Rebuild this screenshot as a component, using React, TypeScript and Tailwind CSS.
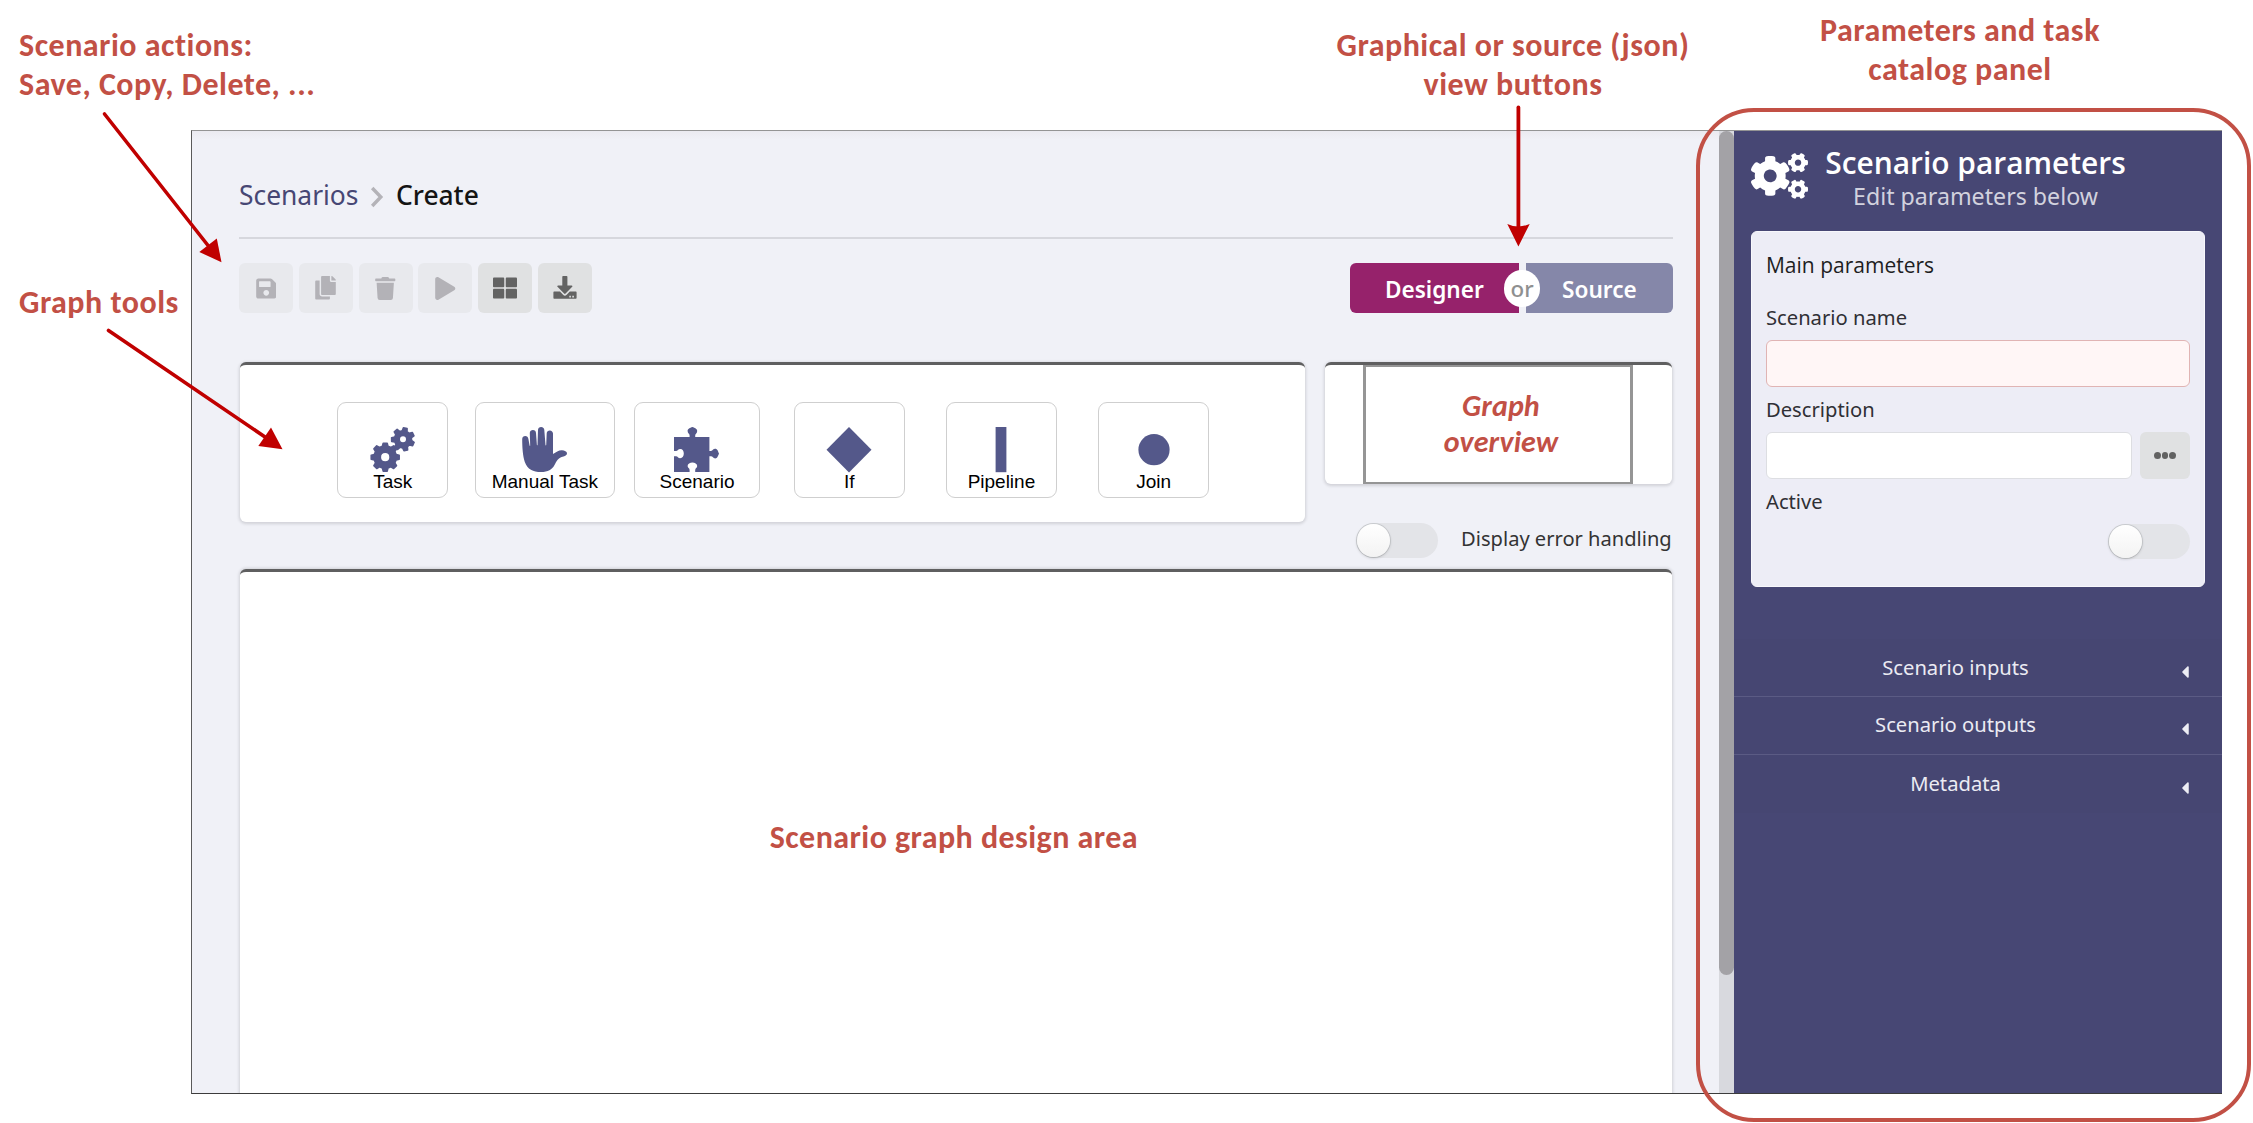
import type { ReactNode } from "react";
import { FaCaretLeft, FaCogs, FaCopy, FaPlay, FaSave, FaThLarge, FaTrash } from "react-icons/fa";

function gearPath(cx: number, cy: number, outer: number, root: number, hole: number, teeth: number, rot: number) {
  const step = (Math.PI * 2) / teeth;
  const at = (r: number, a: number) => `${(cx + r * Math.cos(a)).toFixed(2)} ${(cy + r * Math.sin(a)).toFixed(2)}`;
  let d = "";
  for (let i = 0; i < teeth; i++) {
    const a = rot + i * step;
    d += `${i ? "L" : "M"}${at(root, a - step * 0.32)}L${at(outer, a - step * 0.18)}L${at(outer, a + step * 0.18)}L${at(root, a + step * 0.32)}`;
  }
  return `${d}ZM${cx - hole} ${cy}a${hole} ${hole} 0 1 0 ${hole * 2} 0a${hole} ${hole} 0 1 0 ${-hole * 2} 0Z`;
}

const GearsIcon = () => (
  <svg viewBox="0 0 46 46" className="h-[46px] w-[46px] fill-[#54588a] stroke-[#54588a]" strokeWidth="1.6" strokeLinejoin="round" fillRule="evenodd">
    <path d={gearPath(15.2, 30.2, 14.1, 11.2, 4.9, 8, Math.PI / 2)} />
    <path d={gearPath(33, 12.3, 11.5, 8.6, 3.8, 7, 0.2 - Math.PI / 2)} />
  </svg>
);

const HandIcon = () => (
  <svg viewBox="0 0 46 46" className="h-[46px] w-[46px] fill-[#54588a]">
    <path d="M0.2 12C0.2 10 1.6 9 3.2 9C5 9 6.2 10.3 6.4 12L7.6 18.6C7.7 19 8.2 19 8.2 18.5L7.8 6C7.8 4 9.2 3 10.9 3C12.7 3 14 4.3 14 6L14.9 18C14.9 18.4 15.5 18.4 15.5 18L16 3C16 1.2 17.5 0 19.1 0C21 0 22.3 1.4 22.3 3L23.5 18C23.5 18.5 24.2 18.5 24.2 18L24.7 6.4C24.7 4.6 26.2 3.4 27.8 3.4C29.6 3.4 31 4.7 31 6.6V27C34 25 37 23 40 23.2C42.5 23.3 45 24.5 45 26.3C45 28 43.5 29 41.5 29.4C36 30.5 34.5 34 32.5 38C30 42.8 26 45 19 45C11 45 5.5 42.5 2.8 35C0.8 29 0.2 20 0.2 12Z" />
  </svg>
);

const PuzzleIcon = () => (
  <svg viewBox="0 0 46 46" className="h-[46px] w-[46px] fill-[#54588a]">
    <path d="M0 10H15.6V8.5C15.6 6.6 13.6 6.4 13.6 4C13.6 1.5 16 1 18.4 0C20.8 1 23.2 1.5 23.2 4C23.2 6.4 21.2 6.6 21.2 8.5V10H35.4V24H37C38.8 24 39 21.8 41.2 21.8C43.5 21.8 44 24.5 45 26.6C44 29 43.5 31.4 41.2 31.4C39 31.4 38.8 29.2 37 29.2H35.4V45H21.2V43C21.2 41 23.2 41 23.2 39C23.2 36.8 20.8 35.6 18.4 35.6C16 35.6 13.6 36.8 13.6 39C13.6 41 15.6 41 15.6 43V45H0V29.2H2C3.8 29.2 4 31.3 6.2 31.3C8.6 31.3 9.8 29 9.8 26.6C9.8 24 8.6 22 6.2 22C4 22 3.8 24 2 24H0Z" />
  </svg>
);

const DiamondIcon = () => (
  <svg viewBox="0 0 46 46" className="h-[46px] w-[46px] fill-[#54588a]">
    <path d="M23 0L45.5 22.7L23 45.4L0.5 22.7Z" />
  </svg>
);

const BarIcon = () => (
  <svg viewBox="0 0 46 46" className="h-[46px] w-[46px] fill-[#54588a]">
    <rect x="17.6" width="10.8" height="45.2" />
  </svg>
);

const CircleIcon = () => (
  <svg viewBox="0 0 46 46" className="h-[46px] w-[46px] fill-[#54588a]">
    <circle cx="23" cy="22.7" r="15.6" />
  </svg>
);

const DownloadIcon = () => (
  <svg viewBox="0 0 24 24" className="h-6 w-6 fill-current">
    <path d="M9.3 0.8a.8.8 0 0 1 .8-.8h3.5a.8.8 0 0 1 .8.8V9.4h4.2c.8 0 1.1.8.6 1.3L12.6 17.5a1 1 0 0 1-1.5 0L4.5 10.7c-.5-.5-.2-1.3.6-1.3h4.2Z" />
    <path d="M1.4 15.6H7l3.1 3.1a2.5 2.5 0 0 0 3.6 0l3.1-3.1h5.8c.6 0 1 .4 1 1v5.2c0 .6-.4 1-1 1H1.4c-.6 0-1-.4-1-1v-5.2c0-.6.4-1 1-1Zm14.9 5.8h1.6v-1.6h-1.6Zm3 0h1.6v-1.6h-1.6Z" fillRule="evenodd" />
  </svg>
);

function ActionButton({ active, children }: { active?: boolean; children: ReactNode }) {
  return (
    <button
      className={
        active
          ? "flex h-[49.6px] w-[54px] items-center justify-center rounded-md bg-[#e0e1e2] text-[#636363]"
          : "flex h-[49.6px] w-[54px] items-center justify-center rounded-md bg-[#e8e9ed] text-[#b3b2b7]"
      }
    >
      {children}
    </button>
  );
}

function Tool({ label, box, children }: { label: string; box: string; children: ReactNode }) {
  return (
    <div className="flex w-[152.2px] justify-center">
      <div className={`flex h-[96px] flex-col items-center rounded-[9px] border border-[#cfcfcf] pt-[24.5px] ${box}`}>
        {children}
        <span className="mt-[-2px] whitespace-nowrap font-['Liberation_Sans',sans-serif] text-[19px] leading-[22px] text-black">{label}</span>
      </div>
    </div>
  );
}

const Toggle = () => (
  <div className="flex h-[35px] w-[82px] shrink-0 items-center rounded-full bg-[#e3e4e8] pl-px">
    <div className="h-[33px] w-[33px] rounded-full bg-gradient-to-b from-white to-[#f3f3f3] shadow-[0_1px_3px_rgba(34,36,38,0.22),0_0_0_1px_rgba(34,36,38,0.1)]" />
  </div>
);

const Label = ({ children }: { children: ReactNode }) => (
  <div className="text-[20.2px] leading-7 text-[#303035]">{children}</div>
);

function AccordionRow({ label, last }: { label: string; last?: boolean }) {
  return (
    <div
      className={
        last
          ? "flex h-[57.8px] items-center bg-[#464672] pr-[31px]"
          : "flex h-[57.8px] items-center border-b border-[#5b5b84] bg-[#464672] pr-[31px]"
      }
    >
      <span className="mt-[-2px] grow pl-[1px] text-center text-[20.2px] leading-7 text-[#ebebf2]">{label}</span>
      <FaCaretLeft className="ml-[3px] mt-[8px] h-[20px] w-[12px] text-[#ededf4]" />
    </div>
  );
}

const note = "absolute whitespace-nowrap font-['Carlito','Lato',sans-serif] text-[32px] font-bold leading-[39px] tracking-[0.5px] text-[#c25045] [font-variant-ligatures:none]";

export default function App() {
  return (
    <div className="relative h-[1123px] w-[2253px] overflow-hidden bg-white pl-[191px] pt-[130px] font-['Noto_Sans','Open_Sans',sans-serif]">
      <div className="flex h-[963.5px] w-[2031px] overflow-hidden border-b border-l border-t border-b-[#3c3c3c] border-l-[#5a5a5a] border-t-[#949494] bg-[#f0f1f7]">
        <main className="flex h-full w-[1527.3px] shrink-0 flex-col overflow-hidden bg-[linear-gradient(#ebeaf0_0px,#f0f1f7_9px)] pl-[47px] pr-[46.6px]">
          <header className="flex h-[108px] shrink-0 items-start border-b-2 border-[#d6d7dd] pt-[47.5px] text-[26.4px] leading-8">
            <span className="text-[#474774]">Scenarios</span>
            <svg viewBox="0 0 14 22" className="ml-[12px] mr-[11.5px] mt-[7px] h-[22px] w-[14px] fill-none stroke-[#b4b3b8] stroke-[3.4]">
              <path d="M2.2 2L10.8 11L2.2 20" />
            </svg>
            <span className="font-medium text-[#141414]">Create</span>
          </header>

          <div className="mt-[24.3px] flex shrink-0 justify-between">
            <div className="flex gap-[5.8px]">
              <ActionButton><FaSave className="h-[23px] w-[20.5px]" /></ActionButton>
              <ActionButton><FaCopy className="h-[23.5px] w-[21px]" /></ActionButton>
              <ActionButton><FaTrash className="h-[23px] w-[20.5px]" /></ActionButton>
              <ActionButton><FaPlay className="h-[23px] w-[20.5px]" /></ActionButton>
              <ActionButton active><FaThLarge className="h-[24px] w-[24px]" /></ActionButton>
              <ActionButton active><DownloadIcon /></ActionButton>
            </div>
            <div className="relative flex gap-[7px] text-[22.6px] font-semibold leading-[50px] text-white">
              <button className="h-[50px] w-[169.6px] rounded-l-md bg-[#96226b] pt-[2px] leading-[49px]">Designer</button>
              <button className="h-[50px] w-[146.6px] rounded-r-md bg-[#8587a9] pt-[2px] leading-[49px]">Source</button>
              <span className="absolute left-[154.3px] top-[6.8px] flex h-[36.6px] w-[36.6px] items-center justify-center rounded-full bg-white pt-[2px] text-[22.4px] font-medium text-[#8f9090]">or</span>
            </div>
          </div>

          <div className="mt-[49.2px] flex h-[206.8px] shrink-0 justify-between pl-px pr-px">
            <section className="flex h-[160px] w-[1065px] rounded-[6px] border-t-[3px] border-[#5f5f60] bg-white pl-[76.6px] pt-[36.5px] shadow-[0_1px_3px_1px_rgba(34,36,38,0.15)]">
              <Tool label="Task" box="w-[111px]"><GearsIcon /></Tool>
              <Tool label="Manual Task" box="w-[140px]"><HandIcon /></Tool>
              <Tool label="Scenario" box="w-[126px]"><PuzzleIcon /></Tool>
              <Tool label="If" box="w-[111px]"><DiamondIcon /></Tool>
              <Tool label="Pipeline" box="w-[111px]"><BarIcon /></Tool>
              <Tool label="Join" box="w-[111px]"><CircleIcon /></Tool>
            </section>
            <div className="flex w-[347px] flex-col">
              <section className="flex h-[122px] rounded-[6px] border-t-[3px] border-[#5f5f60] bg-white pl-[38px] shadow-[0_1px_3px_1px_rgba(34,36,38,0.15)]">
                <div className="h-[119px] w-[270.5px] border-x-[3px] border-y-2 border-[#959595] pl-[6px] pt-[20.5px] text-center font-['Carlito','Lato',sans-serif] text-[30px] font-bold italic leading-[36px] tracking-[0.1px] text-[#c25045] [font-variant-ligatures:none]">
                  Graph<br />overview
                </div>
              </section>
              <div className="mt-[38.5px] flex items-center justify-between pl-[31.6px]">
                <Toggle />
                <span className="mt-[-2px] whitespace-nowrap text-[20.1px] leading-7 text-[#333]">Display error handling</span>
              </div>
            </div>
          </div>

          <section className="mx-px flex h-[560px] shrink-0 justify-center rounded-t-[6px] border-t-[3px] border-[#5f5f60] bg-white pt-[246px] shadow-[0_0_3px_1px_rgba(34,36,38,0.15)]">
            <span className="pr-1 font-['Carlito','Lato',sans-serif] text-[32px] font-bold leading-[39px] tracking-[0.45px] text-[#c25045] [font-variant-ligatures:none]">
              Scenario graph design area
            </span>
          </section>
        </main>

        <div className="h-full w-[14.7px] shrink-0 bg-[#d8d9de]">
          <div className="h-[844px] rounded-full bg-[#a3a2a6]" />
        </div>

        <aside className="flex h-full grow flex-col bg-[#474774]">
          <header className="flex h-[100.3px] shrink-0 pl-[17px] pt-[14.2px]">
            <FaCogs className="mt-[8px] h-[46px] w-[57px] text-white" />
            <div className="ml-[16.5px] w-[302px] text-center">
              <h1 className="whitespace-nowrap font-['Open_Sans',sans-serif] text-[29.9px] font-semibold leading-9 text-white">Scenario parameters</h1>
              <p className="whitespace-nowrap text-[23.2px] leading-[30px] text-[#d2d2de]">Edit parameters below</p>
            </div>
          </header>

          <section className="ml-[17px] h-[355.4px] w-[454px] shrink-0 rounded-[6px] border border-[#f8f8fc] bg-[#ededf6] px-[14px] pt-[19.2px]">
            <div className="font-['Open_Sans',sans-serif] text-[21px] font-medium leading-7 text-[#1e1e22]">Main parameters</div>
            <div className="mt-[23.7px]"><Label>Scenario name</Label></div>
            <input className="mt-[9.1px] block h-[46.4px] w-full rounded-[6px] border border-[#e0b4b4] bg-[#fff6f6]" />
            <div className="mt-[8.5px]"><Label>Description</Label></div>
            <div className="mt-[9.1px] flex justify-between">
              <input className="block h-[46.4px] w-[366px] rounded-[6px] border border-[#dddee2] bg-white" />
              <button className="flex h-[46.4px] w-[50px] items-center justify-center gap-[1.4px] rounded-[6px] bg-[#e0e1e2]">
                <i className="h-[6.2px] w-[6.2px] rounded-full bg-[#626262]" />
                <i className="h-[6.2px] w-[6.2px] rounded-full bg-[#626262]" />
                <i className="h-[6.2px] w-[6.2px] rounded-full bg-[#626262]" />
              </button>
            </div>
            <div className="mt-[8.5px]"><Label>Active</Label></div>
            <div className="mt-[8.8px] flex justify-end"><Toggle /></div>
          </section>

          <div className="mt-[52.5px]">
            <AccordionRow label="Scenario inputs" />
            <AccordionRow label="Scenario outputs" />
            <AccordionRow label="Metadata" last />
          </div>
        </aside>
      </div>

      {/* Callouts drawn over the application window */}
      <p className={`left-[19px] top-[26.4px] ${note}`}>Scenario actions:<br />Save, Copy, Delete, ...</p>
      <p className={`left-[19px] top-[283.4px] ${note}`}>Graph tools</p>
      <p className={`left-[1313px] top-[26.4px] w-[400px] text-center ${note}`}>Graphical or source (json)<br />view buttons</p>
      <p className={`left-[1760px] top-[11.4px] w-[400px] text-center ${note}`}>Parameters and task<br />catalog panel</p>
      <div className="absolute left-[1696px] top-[107.5px] h-[1014.5px] w-[554.5px] rounded-[58px] border-[4px] border-[#c25045]" />
      <svg viewBox="0 0 2253 1123" className="pointer-events-none absolute left-0 top-0 h-[1123px] w-[2253px] fill-[#c00000] stroke-[#c00000]" strokeLinecap="round">
        <path d="M104.5 114L210 248" strokeWidth="3.6" />
        <path d="M221.5 262.3L199.3 252L216.8 238.5Z" stroke="none" />
        <path d="M108.5 330.5L268 439" strokeWidth="3.6" />
        <path d="M282.5 449.3L258.3 446L271 427.5Z" stroke="none" />
        <path d="M1518.4 107.5V230" strokeWidth="3.8" />
        <path d="M1518.4 246.5L1507.3 224Q1518.4 229 1529.7 224Z" stroke="none" />
      </svg>
    </div>
  );
}
